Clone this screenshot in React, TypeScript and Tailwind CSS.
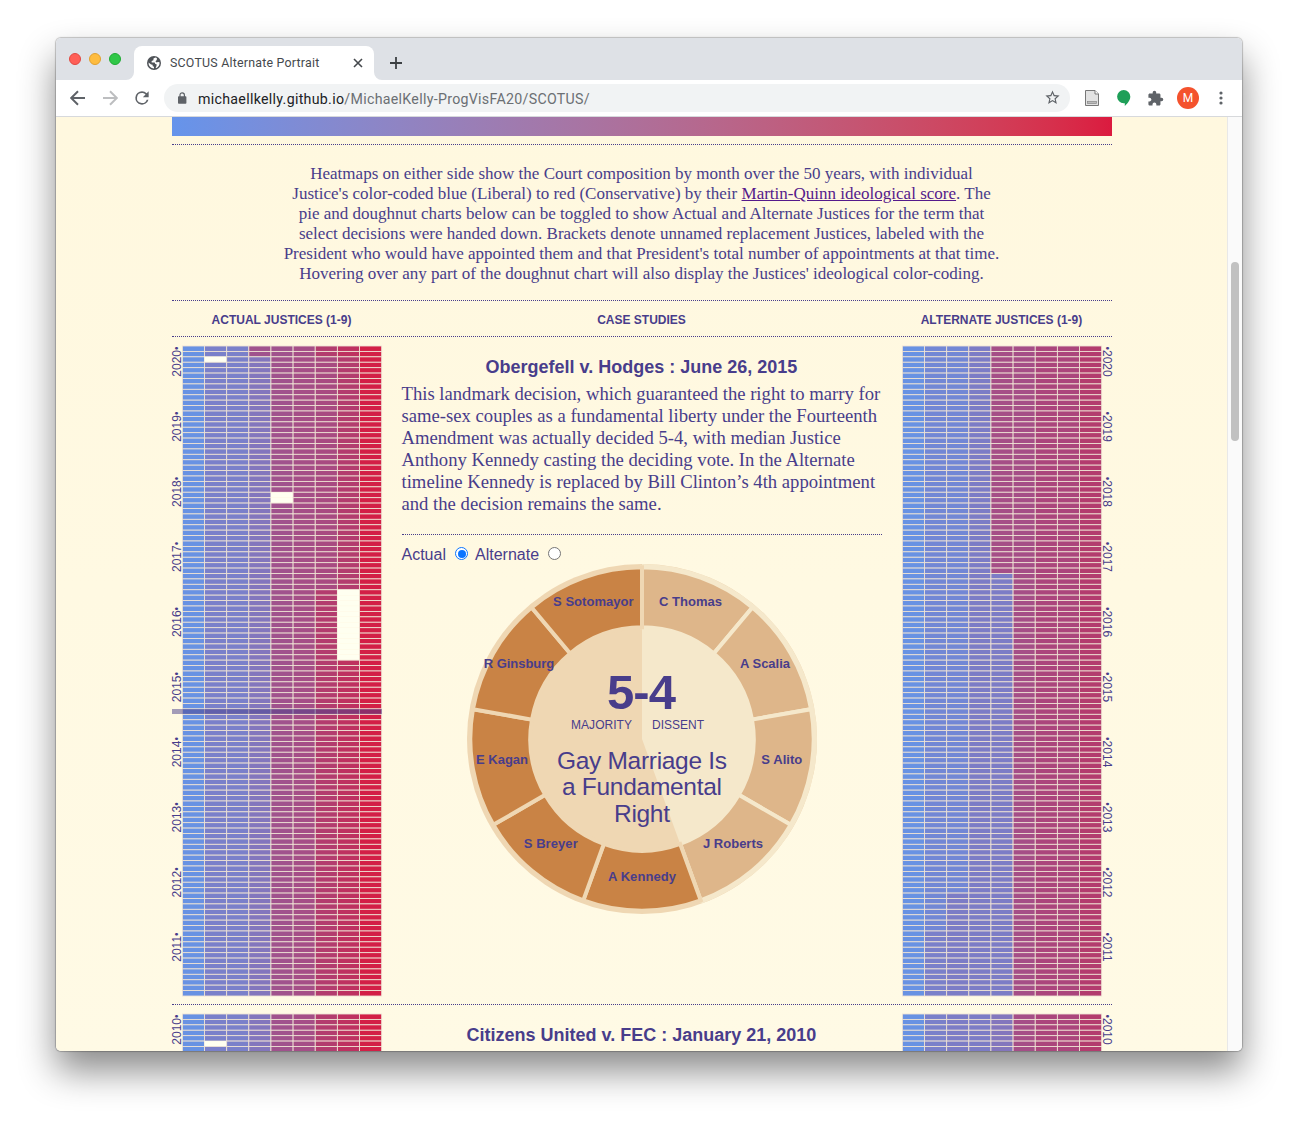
import React from "react";

const INK = "#483d8b";

type Hole = { col: number; from: number; to: number };
type Shift = { col: number; from: number; to: number; color: string };

const ACTUAL = ["#6892e3", "#7a80ca", "#7a80ca", "#8376bd", "#a0528d", "#a54e87", "#a84a81", "#b33c6e", "#d31f46"];
const ALTERNATE = ["#6892e3", "#7287d5", "#7287d5", "#7c7cc6", "#a54e87", "#a54e87", "#ab457c", "#ab457c", "#b33c6e"];

const ACTUAL_SHIFTS: Shift[] = [
  { col: 3, from: 0, to: 2, color: "#a0528d" },
  { col: 6, from: 0, to: 2, color: "#b33c6e" },
  { col: 7, from: 0, to: 2, color: "#be3160" },
  { col: 6, from: 45, to: 120, color: "#b33c6e" },
  { col: 7, from: 58, to: 120, color: "#be3160" },
];
const ACTUAL_HOLES: Hole[] = [
  { col: 1, from: 2, to: 3 },
  { col: 4, from: 27, to: 29 },
  { col: 7, from: 45, to: 58 },
];
const ALT_SHIFTS: Shift[] = [
  { col: 4, from: 42, to: 120, color: "#7c7cc6" },
  { col: 2, from: 101, to: 120, color: "#7c7cc6" },
  { col: 1, from: 108, to: 120, color: "#7a80ca" },
];

const PITCH_X = 22.14;
const PITCH_Y = 650 / 120;

function Heatmap({
  colors, shifts, holes, firstYear, years, height, side, marker,
}: {
  colors: string[]; shifts: Shift[]; holes: Hole[]; firstYear: number; years: number;
  height: number; side: "left" | "right"; marker?: boolean;
}) {
  const x0 = side === "left" ? 10.4 : 0.4;
  const rows = years === 1 ? 12 : 120;
  const cells = [];
  for (let c = 0; c < 9; c++) {
    for (let r = 0; r < rows; r++) {
      const hole = holes.some((h) => h.col === c && r >= h.from && r < h.to);
      const shift = shifts.find((s) => s.col === c && r >= s.from && r < s.to);
      cells.push(
        <rect key={c + "-" + r} x={x0 + c * PITCH_X} y={r * PITCH_Y} width={PITCH_X} height={PITCH_Y}
          fill={hole ? "#fffff0" : shift ? shift.color : colors[c]}
          stroke={hole ? "#fff8e4" : "#efe3d4"} strokeWidth={hole ? 0.3 : 0.85} />,
      );
    }
  }
  return (
    <svg width="210" height={height} viewBox={"0 0 210 " + height} className="block shrink-0 overflow-visible">
      {cells}
      {Array.from({ length: years }, (_, i) => (
        <text key={i} fontSize="12" fill={INK} fontFamily="Liberation Sans, sans-serif"
          textAnchor={side === "left" ? "end" : "start"}
          transform={side === "left" ? `translate(9.3 ${0.5 + i * 65.1}) rotate(-90)` : `translate(200.9 ${0.5 + i * 65.1}) rotate(90)`}>
          {side === "left" ? (
            <>{firstYear - i}<tspan fontSize="10" dy="-1">•</tspan></>
          ) : (
            <><tspan fontSize="10" dy="-1">•</tspan><tspan dy="1">{firstYear - i}</tspan></>
          )}
        </text>
      ))}
      {marker && <rect x="0" y="363" width="210" height="5" fill={INK} opacity="0.5" />}
    </svg>
  );
}

const CX = 175;
const CY = 175;
const pt = (r: number, deg: number) => {
  const a = (deg * Math.PI) / 180;
  return `${(CX + r * Math.sin(a)).toFixed(2)} ${(CY - r * Math.cos(a)).toFixed(2)}`;
};
const ring = (a: number, b: number) =>
  `M${pt(171.7, a)}A171.7 171.7 0 0 1 ${pt(171.7, b)}L${pt(111.7, b)}A111.7 111.7 0 0 0 ${pt(111.7, a)}Z`;

const JUSTICES = [
  { name: "C Thomas", x: 223.5, y: 42, w: 63 },
  { name: "A Scalia", x: 298, y: 104, w: 50 },
  { name: "S Alito", x: 314.8, y: 200, w: 41 },
  { name: "J Roberts", x: 266, y: 284, w: 60 },
  { name: "A Kennedy", x: 175, y: 317, w: 68 },
  { name: "S Breyer", x: 83.7, y: 284, w: 54 },
  { name: "E Kagan", x: 35, y: 200, w: 52 },
  { name: "R Ginsburg", x: 52, y: 104, w: 70.5 },
  { name: "S Sotomayor", x: 126.3, y: 42, w: 80.5 },
];

function Doughnut() {
  return (
    <svg width="350" height="350" viewBox="0 0 350 350" className="block" fill={INK} fontFamily="Liberation Sans, sans-serif" textAnchor="middle">
      <circle cx={CX} cy={CY} r="175" fill="#efd7b3" />
      <path d={`M175 175L${pt(175, 0)}A175 175 0 0 1 ${pt(175, 160)}Z`} fill="#f5e8cb" />
      {JUSTICES.map((j, i) => (
        <path key={j.name} d={ring(i * 40, i * 40 + 40)} fill={i < 4 ? "#deb68a" : "#c98345"} stroke={i < 4 ? "#f5e8cb" : "#efd7b3"} strokeWidth="4" />
      ))}
      {JUSTICES.map((j) => (
        <text key={j.name} x={j.x} y={j.y} fontSize="13" fontWeight="700" textLength={j.w}>{j.name}</text>
      ))}
      <text x="174.5" y="145" fontSize="49" fontWeight="700" textLength="69">5-4</text>
      <text x="134.5" y="165" fontSize="12" textLength="61">MAJORITY</text>
      <text x="211" y="165" fontSize="12" textLength="52">DISSENT</text>
      <text x="175" y="205" fontSize="24.5" textLength="170">Gay Marriage Is</text>
      <text x="175" y="231" fontSize="24.5" textLength="160">a Fundamental</text>
      <text x="175" y="258" fontSize="24.5" textLength="56">Right</text>
    </svg>
  );
}

function Rule({ className = "" }: { className?: string }) {
  return <div className={"h-px shrink-0 border-t border-dotted border-[#483d8b] " + className} />;
}

function Chrome() {
  return (
    <>
      <div className="flex h-[42px] shrink-0 items-end bg-[#dee1e6]">
        <div className="flex h-[42px] w-[78px] items-center gap-2 pl-[13px]">
          <span className="size-3 rounded-full border border-[#e14942] bg-[#ff5f57]" />
          <span className="size-3 rounded-full border border-[#e1a12f] bg-[#febc3f]" />
          <span className="size-3 rounded-full border border-[#1fab33] bg-[#30c748]" />
        </div>
        <div className="relative flex h-[34px] w-[240px] items-center rounded-t-lg bg-white pl-[13px]">
          <svg width="8" height="8" className="absolute bottom-0 -left-2"><path d="M8 0V8H0A8 8 0 0 0 8 0Z" fill="#fff" /></svg>
          <svg width="8" height="8" className="absolute bottom-0 -right-2"><path d="M0 0V8H8A8 8 0 0 1 0 0Z" fill="#fff" /></svg>
          <svg width="14" height="14" viewBox="0 0 14 14">
            <circle cx="7" cy="7" r="7" fill="#4f5358" />
            <path d="M8.3 1.5 6.5 2.6 6.4 4.2 4.6 4.9 4.7 6.4 7.7 6.4 8.3 8 9.6 8.3 9.5 9.9 8.6 11.8 9.6 11.9A5.6 5.6 0 0 0 12.5 6.3L11 6.1 9.6 6.5 8.4 5.2 9.8 4 9.9 2.1ZM1.5 6.6 4.1 8.4 5.6 8.7 5.7 10.2 7 10.8 7 12.5A5.6 5.6 0 0 1 1.5 6.6Z" fill="#fff" />
          </svg>
          <span className="ml-[9px] w-[150px] font-[Roboto] text-[12.4px] tracking-[0.22px] whitespace-nowrap text-[#45494d]">SCOTUS Alternate Portrait</span>
          <svg width="10" height="10" viewBox="0 0 10 10" className="ml-[33px]" stroke="#45494d" strokeWidth="1.6"><path d="m1 1 8 8M9 1 1 9" /></svg>
        </div>
        <svg width="12" height="12" viewBox="0 0 12 12" className="mb-[11px] ml-4" stroke="#3c4043" strokeWidth="1.8"><path d="M6 0v12M0 6h12" /></svg>
      </div>
      <div className="flex h-[37px] shrink-0 items-center border-b border-[#d7d9dc] bg-white pl-[10px] text-[#5f6368]">
        <svg width="24" height="24" viewBox="0 0 24 24" fill="none" stroke="currentColor" strokeWidth="2"><path d="M19 12H6M12 5.2 5.2 12l6.8 6.8" /></svg>
        <svg width="24" height="24" viewBox="0 0 24 24" className="ml-2" fill="none" stroke="#bdbec0" strokeWidth="2"><path d="M5 12h13M12 5.2l6.8 6.8-6.8 6.8" /></svg>
        <svg width="20" height="20" viewBox="0 0 24 24" className="ml-[10px]" fill="currentColor"><path d="M17.65 6.35A7.96 7.96 0 0 0 12 4a8 8 0 1 0 7.73 10h-2.08A6 6 0 1 1 12 6c1.66 0 3.14.69 4.22 1.78L13 11h7V4z" /></svg>
        <div className="ml-3 flex h-7 w-[906px] items-center rounded-full bg-[#f1f3f4] pl-[13px]">
          <svg width="10" height="12" viewBox="0 0 10 12"><rect x="1" y="4.2" width="8.4" height="7.6" rx="0.8" fill="#5f6368" /><path d="M3 5V3a2.2 2.2 0 0 1 4.4 0v2" fill="none" stroke="#5f6368" strokeWidth="1.2" /></svg>
          <span className="ml-[11px] w-[400px] pt-px font-[Roboto] text-[14.2px] leading-5 tracking-[0.3px] whitespace-nowrap text-[#6b6f73]"><span className="text-[#202124]">michaellkelly.github.io</span>/MichaelKelly-ProgVisFA20/SCOTUS/</span>
          <svg width="17" height="17" viewBox="0 0 24 24" className="mr-[9px] mb-px ml-auto" fill="currentColor"><path d="m22 9.24-7.19-.62L12 2 9.19 8.63 2 9.24l5.46 4.73L5.82 21 12 17.27 18.18 21l-1.63-7.03L22 9.24zM12 15.4l-3.76 2.27 1-4.28-3.32-2.88 4.38-.38L12 6.1l1.71 4.04 4.38.38-3.32 2.88 1 4.28L12 15.4z" /></svg>
        </div>
        <svg width="14" height="16" viewBox="0 0 14 16" className="ml-[15px]"><path d="M.5.5H10L13.5 4V15.5H.5Z" fill="#e2e2e2" stroke="#777" /><path d="M10 .5V4h3.5" fill="#fff" stroke="#777" /><rect x="2.5" y="11.5" width="9" height="2" fill="#bbb" stroke="#888" strokeWidth=".7" /></svg>
        <svg width="14" height="16" viewBox="0 0 14 16" className="ml-[18px]"><path d="M6.7 0a6.6 6.6 0 0 1 6.6 6.6c0 4-2.8 7-5.5 9.4v-2.8H6.7A6.6 6.6 0 0 1 6.7 0Z" fill="#1e9f58" /></svg>
        <svg width="17" height="17" viewBox="0 0 24 24" className="ml-4" fill="currentColor"><path d="M20.5 11H19V7c0-1.1-.9-2-2-2h-4V3.5a2.5 2.5 0 0 0-5 0V5H4c-1.1 0-2 .9-2 2v3.8h1.5c1.49 0 2.7 1.21 2.7 2.7S4.99 16.2 3.5 16.2H2V20c0 1.1.9 2 2 2h3.8v-1.5c0-1.49 1.21-2.7 2.7-2.7s2.7 1.21 2.7 2.7V22H17c1.1 0 2-.9 2-2v-4h1.5a2.5 2.5 0 0 0 0-5z" /></svg>
        <span className="ml-[13px] flex size-[22px] items-center justify-center rounded-full bg-[#f4522d] font-[Roboto] text-[12px] text-white">M</span>
        <svg width="4" height="14" viewBox="0 0 4 14" className="ml-5" fill="currentColor"><circle cx="2" cy="2" r="1.6" /><circle cx="2" cy="7" r="1.6" /><circle cx="2" cy="12" r="1.6" /></svg>
      </div>
    </>
  );
}

export default function App() {
  return (
    <div className="h-[1125px] w-[1298px] overflow-hidden bg-white pt-[38px] pl-[56px]">
      <div className="flex h-[1013px] w-[1186px] flex-col rounded-[5px] shadow-[0_0_1px_1px_rgba(0,0,0,0.22),0_20px_36px_rgba(0,0,0,0.46)]">
        <div className="flex min-h-0 flex-1 flex-col overflow-hidden rounded-[5px]">
          <Chrome />
          <div className="flex min-h-0 flex-1">
            <main className="flex w-[1171px] flex-col overflow-hidden bg-linear-to-b from-[#fff8df] to-[#fffae5] pr-[115px] pl-[116px] font-['Liberation_Sans'] text-[#483d8b]">
              <div className="h-[19px] shrink-0 bg-linear-to-r from-[#6594eb] to-[#db1a3f]" />
              <Rule className="mt-2" />
              <p className="mt-[19px] shrink-0 pr-px text-center font-['Liberation_Serif'] text-[17.02px] leading-5 whitespace-nowrap">
                Heatmaps on either side show the Court composition by month over the 50 years, with individual<br />
                Justice's color-coded blue (Liberal) to red (Conservative) by their <a className="text-[#551a8b] underline">Martin-Quinn ideological score</a>. The<br />
                pie and doughnut charts below can be toggled to show Actual and Alternate Justices for the term that<br />
                select decisions were handed down. Brackets denote unnamed replacement Justices, labeled with the<br />
                President who would have appointed them and that President's total number of appointments at that time.<br />
                Hovering over any part of the doughnut chart will also display the Justices' ideological color-coding.
              </p>
              <Rule className="mt-4" />
              <div className="flex h-[35px] shrink-0 items-center pt-0.5 text-center text-[12px] font-bold whitespace-nowrap">
                <h2 className="w-[219px]">ACTUAL JUSTICES (1-9)</h2>
                <h2 className="flex-1 pl-px">CASE STUDIES</h2>
                <h2 className="w-[221px]">ALTERNATE JUSTICES (1-9)</h2>
              </div>
              <Rule />
              <section className="mt-[9px] flex h-[650px] shrink-0">
                <Heatmap side="left" colors={ACTUAL} shifts={ACTUAL_SHIFTS} holes={ACTUAL_HOLES} firstYear={2020} years={10} height={650} marker />
                <div className="flex w-[520px] flex-col px-5">
                  <h3 className="mt-[9px] pr-px text-center text-[18px] leading-6 font-bold whitespace-nowrap">Obergefell v. Hodges : June 26, 2015</h3>
                  <p className="mt-1 -ml-[0.5px] font-['Liberation_Serif'] text-[18.66px] leading-[22px] whitespace-nowrap">
                    This landmark decision, which guaranteed the right to marry for<br />
                    same-sex couples as a fundamental liberty under the Fourteenth<br />
                    Amendment was actually decided 5-4, with median Justice<br />
                    Anthony Kennedy casting the deciding vote. In the Alternate<br />
                    timeline Kennedy is replaced by Bill Clinton’s 4th appointment<br />
                    and the decision remains the same.
                  </p>
                  <Rule className="mt-[19px]" />
                  <div className="mt-[9px] -ml-[0.5px] flex h-5 items-center text-[16px]">
                    <span className="w-[53.5px] pt-px">Actual</span>
                    <span className="mb-px flex size-[13px] items-center justify-center rounded-full border border-[#0b75ff] bg-white"><span className="size-2 rounded-full bg-[#0b75ff]" /></span>
                    <span className="ml-[7px] w-[73px] pt-px">Alternate</span>
                    <span className="mb-px size-[13px] rounded-full border border-[#767676] bg-white" />
                  </div>
                  <div className="flex justify-center"><Doughnut /></div>
                </div>
                <Heatmap side="right" colors={ALTERNATE} shifts={ALT_SHIFTS} holes={[]} firstYear={2020} years={10} height={650} />
              </section>
              <Rule className="mt-2" />
              <section className="mt-[9px] flex h-[37px] shrink-0">
                <Heatmap side="left" colors={[...ACTUAL.slice(0, 6), "#b33c6e", "#be3160", "#d31f46"]} shifts={[]} holes={[{ col: 1, from: 5, to: 6 }]} firstYear={2010} years={1} height={37} />
                <h3 className="w-[520px] pt-[9px] pr-px text-center text-[18px] leading-6 font-bold whitespace-nowrap">Citizens United v. FEC : January 21, 2010</h3>
                <Heatmap side="right" colors={["#6892e3", "#7a80ca", "#7c7cc6", "#7c7cc6", "#8376bd", "#a54e87", "#ab457c", "#ab457c", "#b33c6e"]} shifts={[]} holes={[]} firstYear={2010} years={1} height={37} />
              </section>
            </main>
            <div className="w-[15px] border-l border-[#e8e8e8] bg-[#fafafa] pt-[145px] pl-[3px]">
              <div className="h-[179px] w-2 rounded-full bg-[#c1c1c1]" />
            </div>
          </div>
        </div>
      </div>
    </div>
  );
}
